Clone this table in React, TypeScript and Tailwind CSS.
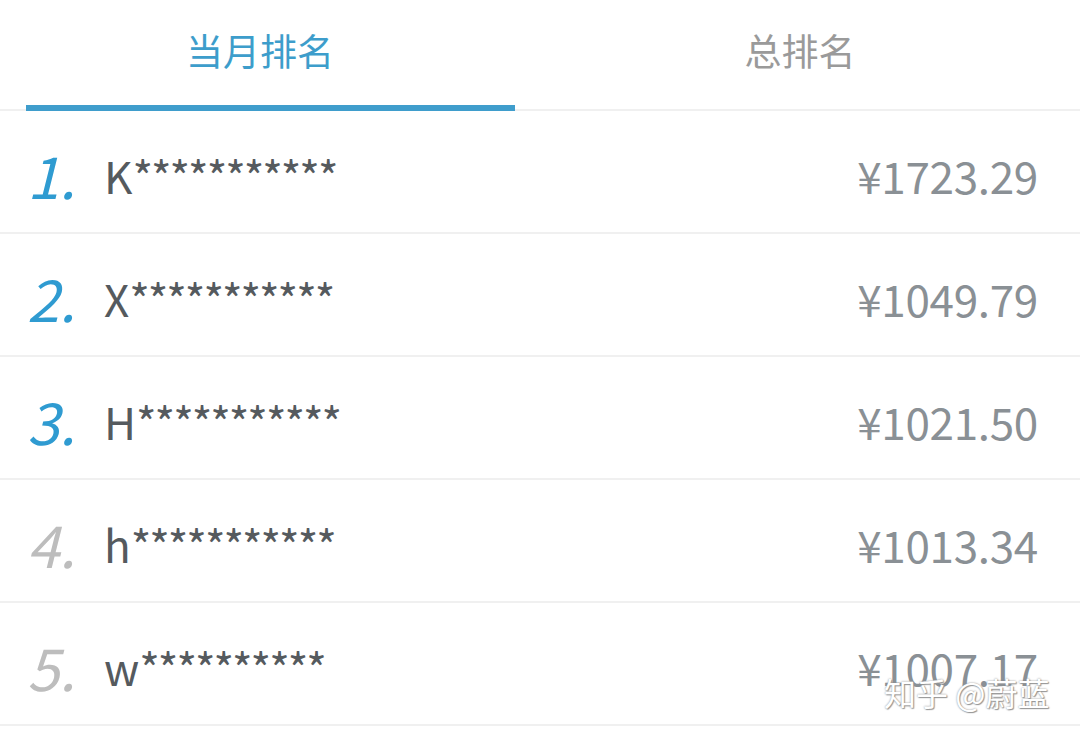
import React, { useState } from "react";

type Rank = {
  name: string;
  mask: string;
  amount: string;
};

const ranks: Rank[] = [
  { name: "K", mask: "***********", amount: "¥1723.29" },
  { name: "X", mask: "***********", amount: "¥1049.79" },
  { name: "H", mask: "***********", amount: "¥1021.50" },
  { name: "h", mask: "***********", amount: "¥1013.34" },
  { name: "w", mask: "**********", amount: "¥1007.17" },
];

const App: React.FC = () => {
  const [tab, setTab] = useState(0);

  return (
    <div className="relative w-[1080px] h-[738px] bg-white overflow-hidden font-['Noto_Sans_CJK_SC','Noto_Sans',sans-serif]">
      {/* Tabs */}
      <div className="flex h-[111px] border-b-2 border-[#f0f0f0]">
        {["当月排名", "总排名"].map((label, i) => (
          <button
            key={label}
            onClick={() => setTab(i)}
            className="flex-1 flex flex-col"
          >
            <span
              className={`mt-[24px] pr-[20px] text-[37px] leading-[52px] text-center ${
                tab === i ? "text-[#3d9dcb]" : "text-[#9a9a9a]"
              }`}
            >
              {label}
            </span>
            <span className="flex-1" />
            <span
              className={`ml-[26px] w-[489px] h-[6px] mb-[-2px] ${tab === i ? "bg-[#3f9dcc]" : "bg-transparent"}`}
            />
          </button>
        ))}
      </div>

      {/* Rank list */}
      <div className="flex flex-col">
        {ranks.map((r, i) => (
          <div
            key={i}
            className="flex items-center h-[123px] border-b-2 border-[#f0f0f0] pl-[27px] pr-[42px]"
          >
            <span
              className={`w-[77px] italic text-[58px] leading-none mt-[4px] ${
                i < 3 ? "text-[#2f9bd1]" : "text-[#bdbdbd]"
              }`}
            >
              {i + 1}.
            </span>
            <span className="text-[44px] leading-none text-[#555a5e] mt-[6px]">
              {r.name}
              <span className="tracking-[-2px]">{r.mask}</span>
            </span>
            <span className="ml-auto text-[44px] leading-none text-[#8a9095] mt-[6px] tracking-[-0.3px]">
              {r.amount}
            </span>
          </div>
        ))}
      </div>

      {/* Watermark */}
      <div className="absolute left-[884px] top-[676px] text-[32px] leading-none text-white [text-shadow:0_0_2px_#8a8a8a,1px_1px_1px_#999]">
        知乎 @蔚蓝
      </div>
    </div>
  );
};

export default App;
